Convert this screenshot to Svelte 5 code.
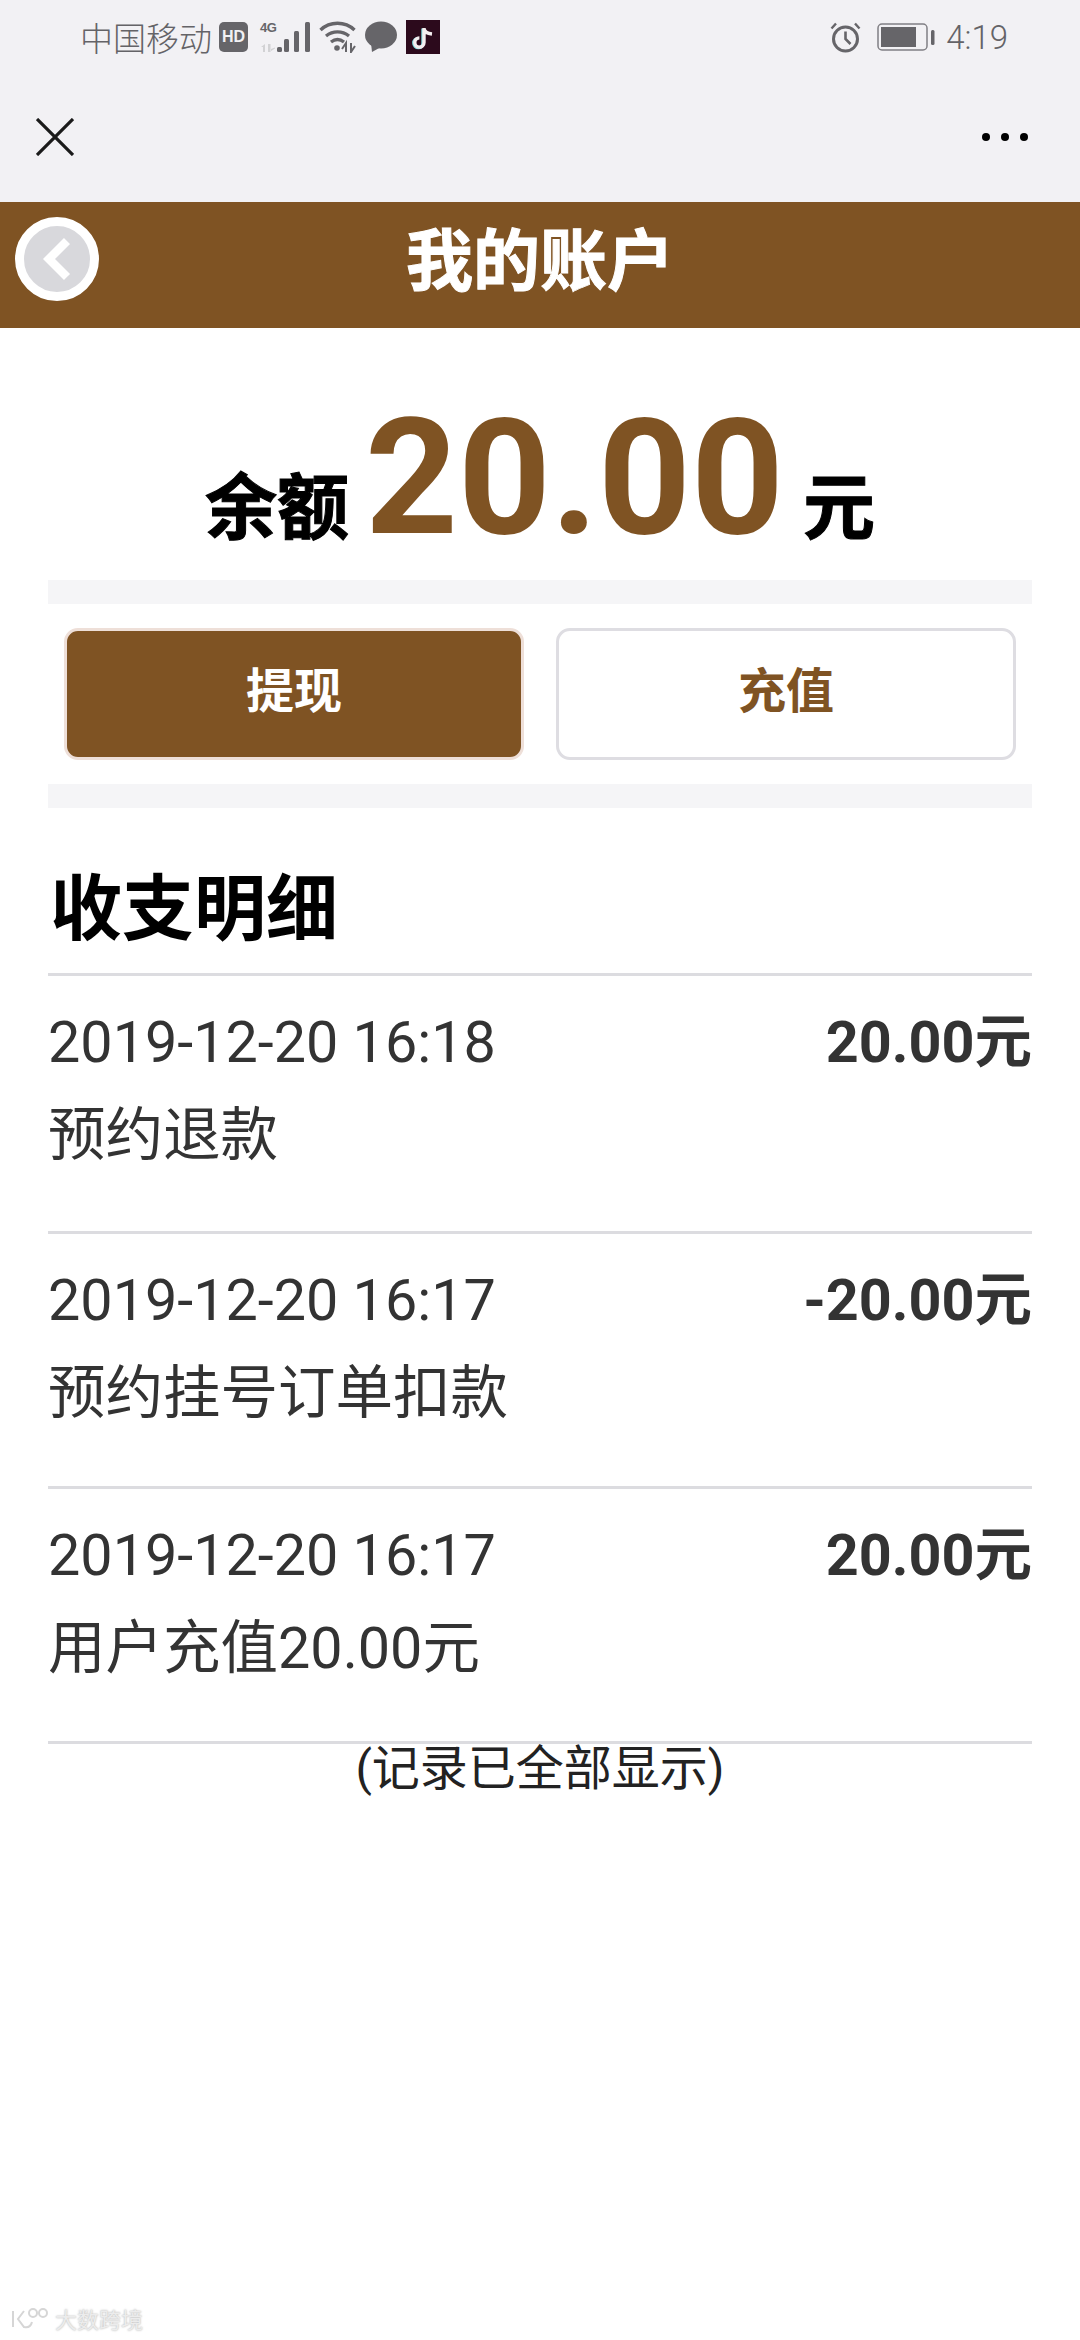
<script lang="ts">
    const records = [
        { time: "2019-12-20 16:18", amount: "20.00元", title: "预约退款" },
        { time: "2019-12-20 16:17", amount: "-20.00元", title: "预约挂号订单扣款" },
        { time: "2019-12-20 16:17", amount: "20.00元", title: "用户充值20.00元" },
    ];
</script>

<div class="page">
    <div class="top">
        <div class="status">
            <div class="status-left">
                <span class="carrier">中国移动</span>
                <span class="hd">HD</span>
                <div class="signal">
                    <span class="net">4G</span>
                    <svg width="50" height="32" viewBox="0 0 50 32">
                        <path d="M1 26l4-3v8H3v-5zM8 23h2.500v8H8zM11 28l4-1.500v1L11 30z" fill="#d2d2d4" />
                        <rect x="17" y="26" width="5" height="5" rx="1.500" fill="#666569" />
                        <rect x="24" y="18" width="5" height="13" rx="1.500" fill="#666569" />
                        <rect x="34" y="10" width="5" height="21" rx="1.500" fill="#666569" />
                        <rect x="45" y="1" width="5" height="30" rx="1.500" fill="#666569" />
                    </svg>
                </div>
                <svg class="wifi" width="37" height="32" viewBox="0 0 37 32" fill="none" stroke="#666569" stroke-width="3.400">
                    <path d="M1.500 9C11 0 26 0 35.500 9" />
                    <path d="M7 15c7-5.500 16-5.500 23 0" />
                    <path d="M12 21c4-3 9-3 13 0" />
                    <circle cx="18" cy="27" r="2.800" fill="#666569" stroke="none" />
                    <path d="M27 31v-9l-4 6M32 22v9l4-6" stroke-width="2" />
                </svg>
                <svg class="msg" width="32" height="32" viewBox="0 0 32 32">
                    <ellipse cx="16" cy="14" rx="16" ry="13.500" fill="#666569" />
                    <path d="M6 22l1 9 9-5z" fill="#666569" />
                </svg>
                <svg class="tiktok" width="34" height="34" viewBox="0 0 34 34">
                    <rect width="34" height="34" fill="#2c0a1c" />
                    <path d="M18 8v14.500a4.600 4.600 0 1 1-4.600-4.600" fill="none" stroke="#7fdde0" stroke-width="3.400" transform="translate(-1 .5)" />
                    <path d="M18 8v14.500a4.600 4.600 0 1 1-4.600-4.600M18 8.500c.5 3 3 5 8 5.500" fill="none" stroke="#f5eef0" stroke-width="3.400" />
                </svg>
            </div>
            <div class="status-right">
                <svg class="alarm" width="31" height="32" viewBox="0 0 31 32" fill="none" stroke="#666569" stroke-width="3">
                    <circle cx="15.500" cy="18" r="12" />
                    <path d="M15.500 10.500V18l5 5" stroke-width="2.600" />
                    <path d="M1.500 7.500L6 2.500M29.500 7.500L25 2.500" stroke-width="2.400" />
                </svg>
                <svg class="battery" width="58" height="28" viewBox="0 0 58 28">
                    <rect x="1" y="1" width="49" height="26" rx="4" fill="none" stroke="#807f84" stroke-width="1.500" />
                    <rect x="4" y="4" width="35" height="20" fill="#666569" />
                    <rect x="54" y="7" width="3.500" height="15" rx="1.500" fill="#666569" />
                </svg>
                <span class="clock">4:19</span>
            </div>
        </div>
        <div class="nav">
            <svg width="38" height="38" viewBox="0 0 38 38" stroke="#1a1a1a" stroke-width="3.200">
                <path d="M1 1l36 36M37 1L1 37" />
            </svg>
            <div class="dots"><i></i><i></i><i></i></div>
        </div>
    </div>

    <header class="bar">
        <button class="back" type="button" aria-label="返回">
            <svg width="32" height="44" viewBox="0 0 32 44" fill="none" stroke="#fff" stroke-width="8.500">
                <path d="M26 4L8 22l18 18" />
            </svg>
        </button>
        <h1>我的账户</h1>
    </header>

    <section class="balance">
        <span class="label">余额</span>
        <span class="money">20.00</span>
        <span class="label">元</span>
    </section>

    <div class="band"></div>
    <div class="actions">
        <button class="btn primary" type="button">提现</button>
        <button class="btn" type="button">充值</button>
    </div>
    <div class="band"></div>

    <h2>收支明细</h2>
    <ul class="records">
        {#each records as rec}
            <li>
                <div class="line">
                    <span>{rec.time}</span>
                    <strong>{rec.amount}</strong>
                </div>
                <div class="desc">{rec.title}</div>
            </li>
        {/each}
    </ul>
    <p class="end">(记录已全部显示)</p>

    <div class="mark">
        <svg width="40" height="24" viewBox="0 0 40 24" fill="none" stroke="#d6d6d6" stroke-width="2">
            <path d="M3 5v16M14 5L8 13l6 8c4 1 7-1 8-5" />
            <circle cx="23" cy="7" r="4" />
            <circle cx="33" cy="7" r="4" />
        </svg>
        <span>大数跨境</span>
    </div>
</div>

<style>
    :global(body) {
        margin: 0;
        background: #fff;
    }

    .page {
        position: relative;
        width: 1080px;
        height: 2340px;
        overflow: hidden;
        background: #fff;
        font-family: Roboto, "Noto Sans CJK SC", sans-serif;
    }

    .top {
        height: 202px;
        background: #f2f1f4;
    }

    .status {
        height: 74px;
        padding: 0 72px 0 80px;
        box-sizing: border-box;
        display: flex;
        align-items: center;
        justify-content: space-between;
        color: #646367;
    }

    .status-left,
    .status-right {
        display: flex;
        align-items: center;
    }

    .carrier {
        font-size: 33px;
        font-weight: 300;
        margin-right: 7px;
    }

    .hd {
        width: 29px;
        height: 30px;
        border-radius: 5px;
        background: #666569;
        color: #f2f1f4;
        font: 700 16px/30px "Liberation Sans", sans-serif;
        text-align: center;
    }

    .signal {
        position: relative;
        height: 32px;
        margin-left: 12px;
    }

    .signal svg {
        display: block;
    }

    .net {
        position: absolute;
        left: 0;
        top: -1px;
        color: #666569;
        font: 700 13px/16px "Liberation Sans", sans-serif;
        letter-spacing: -0.5px;
    }

    .wifi,
    .msg,
    .tiktok {
        margin-left: 9px;
    }

    .battery {
        margin-left: 16px;
    }

    .clock {
        margin-left: 11px;
        font-size: 33px;
        font-weight: 300;
    }

    .nav {
        height: 128px;
        padding: 0 52px 2px 36px;
        box-sizing: border-box;
        display: flex;
        align-items: center;
        justify-content: space-between;
    }

    .dots {
        display: flex;
        gap: 11px;
    }

    .dots i {
        width: 8px;
        height: 8px;
        border-radius: 50%;
        background: #000;
    }

    .bar {
        position: relative;
        height: 126px;
        background: #7f5323;
        display: flex;
        align-items: center;
        justify-content: center;
    }

    .bar h1 {
        margin: 0 0 20px;
        color: #fff;
        font-size: 67px;
        font-weight: 700;
        -webkit-text-stroke: 1px #fff;
    }

    .back {
        position: absolute;
        left: 15px;
        top: 15px;
        width: 84px;
        height: 84px;
        padding: 0;
        box-sizing: border-box;
        border: 9px solid #fff;
        border-radius: 50%;
        background: #d8d8dc;
        display: flex;
        align-items: center;
        justify-content: center;
    }

    .balance {
        height: 252px;
        padding-top: 69px;
        box-sizing: border-box;
        display: flex;
        align-items: baseline;
        justify-content: center;
        color: #000;
        font-weight: 700;
        line-height: 1;
    }

    .label {
        font-size: 72px;
        -webkit-text-stroke: 1px #000;
    }

    .money {
        margin: 0 19px 0 16px;
        font-size: 162px;
        color: #7f5323;
    }

    .band {
        height: 24px;
        margin: 0 48px;
        background: #f5f5f7;
    }

    .actions {
        padding: 24px 64px;
        display: flex;
        gap: 32px;
    }

    .btn {
        flex: 1;
        height: 132px;
        padding: 0 0 14px;
        border: 3px solid #dedde2;
        border-radius: 14px;
        background: #fff;
        color: #7f5323;
        font: 700 48px Roboto, "Noto Sans CJK SC", sans-serif;
    }

    .btn.primary {
        background: #7f5323;
        border-color: #eedfd8;
        color: #fff;
    }

    h2 {
        margin: 0 48px;
        padding: 62px 0 0 2px;
        height: 165px;
        box-sizing: border-box;
        font-size: 72px;
        line-height: 80px;
        font-weight: 700;
        color: #000;
    }

    .records {
        list-style: none;
        margin: 0 48px;
        padding: 0;
        border-top: 3px solid #dcdce0;
    }

    li {
        height: 255px;
        box-sizing: border-box;
        padding-top: 28px;
        border-bottom: 3px solid #dcdce0;
        color: #333;
        font-size: 57.5px;
        line-height: 78px;
    }

    li:first-child {
        height: 258px;
    }

    .line {
        display: flex;
        justify-content: space-between;
    }

    .line strong {
        font-weight: 700;
    }

    .desc {
        margin-top: 15px;
    }

    .end {
        margin: 0;
        text-align: center;
        font-size: 48px;
        line-height: 50px;
        color: #222;
    }

    .mark {
        position: absolute;
        left: 10px;
        bottom: 6px;
        display: flex;
        align-items: center;
        gap: 5px;
        color: #ececec;
        font-size: 22px;
        text-shadow: 0 0 2px #aaa;
    }
</style>
